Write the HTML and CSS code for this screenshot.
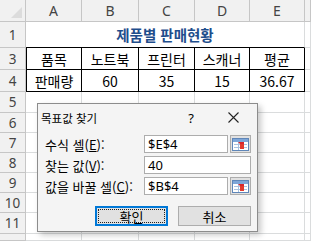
FILE: index.html
```html
<!DOCTYPE html>
<html lang="ko">
<head>
    <meta charset="UTF-8">
    <title>목표값 찾기</title>
    <link rel="stylesheet" href="styles.css">
</head>
<body>
    <div class="sheet">
        <div class="head corner"><span class="tri"></span></div>
        <div class="head">A</div>
        <div class="head">B</div>
        <div class="head">C</div>
        <div class="head">D</div>
        <div class="head">E</div>
        <div class="head"></div>

        <div class="head num">1</div>
        <div class="title">제품별 판매현황</div>
        <div></div>

        <div class="head num">3</div>
        <div class="t first">품목</div>
        <div class="t">노트북</div>
        <div class="t">프린터</div>
        <div class="t">스캐너</div>
        <div class="t">평균</div>
        <div></div>

        <div class="head num">4</div>
        <div class="t first">판매량</div>
        <div class="t">60</div>
        <div class="t">35</div>
        <div class="t">15</div>
        <div class="t">36.67</div>
        <div></div>

        <div class="head num">5</div><div></div><div></div><div></div><div></div><div></div><div></div>
        <div class="head num">6</div><div></div><div></div><div></div><div></div><div></div><div></div>
        <div class="head num">7</div><div></div><div></div><div></div><div></div><div></div><div></div>
        <div class="head num">8</div><div></div><div></div><div></div><div></div><div></div><div></div>
        <div class="head num">9</div><div></div><div></div><div></div><div></div><div></div><div></div>
        <div class="head num">10</div><div></div><div></div><div></div><div></div><div></div><div></div>
        <div class="head num">11</div><div></div><div></div><div></div><div></div><div></div><div></div>
        <div class="head num"></div><div></div><div></div><div></div><div></div><div></div><div></div>
    </div>

    <div class="dialog">
        <div class="dlg-bar">
            <span class="dlg-title">목표값 찾기</span>
            <span class="dlg-help">?</span>
            <svg class="dlg-close" width="11" height="11" viewBox="0 0 11 11">
                <path d="M0.5 0.5 L10.5 10.5 M10.5 0.5 L0.5 10.5" stroke="#222" stroke-width="1.1" fill="none"/>
            </svg>
        </div>
        <div class="dlg-form">
            <label>수식 셀(<u>E</u>):</label>
            <div class="field">
                <span class="input">$E$4</span>
                <span class="ref">
                    <svg width="17" height="13" viewBox="0 0 17 13">
                        <rect x="0.5" y="0.5" width="16" height="12" fill="#fff" stroke="#5f86b8"/>
                        <rect x="1" y="1" width="15" height="3" fill="#7ea6d8"/>
                        <path d="M2 6.5 H15 M2 9.5 H15 M6.5 4 V12" stroke="#a9c2e0" stroke-width="1"/>
                        <path d="M6 4 L12 4 L12 10 Z" fill="#d8262b"/>
                        <rect x="8" y="6" width="4" height="5" fill="#e23a2e"/>
                    </svg>
                </span>
            </div>
            <label>찾는 값(<u>V</u>):</label>
            <div class="field">
                <span class="input">40</span>
            </div>
            <label>값을 바꿀 셀(<u>C</u>):</label>
            <div class="field">
                <span class="input">$B$4</span>
                <span class="ref">
                    <svg width="17" height="13" viewBox="0 0 17 13">
                        <rect x="0.5" y="0.5" width="16" height="12" fill="#fff" stroke="#5f86b8"/>
                        <rect x="1" y="1" width="15" height="3" fill="#7ea6d8"/>
                        <path d="M2 6.5 H15 M2 9.5 H15 M6.5 4 V12" stroke="#a9c2e0" stroke-width="1"/>
                        <path d="M6 4 L12 4 L12 10 Z" fill="#d8262b"/>
                        <rect x="8" y="6" width="4" height="5" fill="#e23a2e"/>
                    </svg>
                </span>
            </div>
        </div>
        <div class="dlg-buttons">
            <button class="btn ok"><span>확인</span></button>
            <button class="btn">취소</button>
        </div>
    </div>
</body>
</html>
```

FILE: styles.css
```css
* {
    box-sizing: border-box;
}
body {
    margin: 0;
    width: 311px;
    height: 241px;
    overflow: hidden;
    position: relative;
    background: #fff;
    font-family: "Noto Sans CJK KR", "Noto Sans", sans-serif;
}
.sheet {
    display: grid;
    grid-template-columns: 26px 56px 57px 56px 55px 55px 6px;
    grid-template-rows: 22px 26px 22px 22px 21px 20px 20px 20px 20px 20px 21px 7px;
}
.sheet > div {
    display: flex;
    align-items: center;
    justify-content: center;
    border-right: 1px solid #dadcdd;
    border-bottom: 1px solid #dadcdd;
    font-size: 14px;
    color: #000;
}
.sheet > .head {
    background: #f1f1f1;
    border-color: #c6c6c6;
    color: #444;
    font-family: "Noto Sans", sans-serif;
    font-size: 14px;
}
.sheet > .num {
    font-size: 13.5px;
}
.corner {
    position: relative;
}
.tri {
    position: absolute;
    right: 3px;
    bottom: 3px;
    border-left: 11px solid transparent;
    border-bottom: 11px solid #dcdcdc;
}
.sheet > .title {
    grid-column: span 5;
    font-weight: bold;
    font-size: 14.5px;
    color: #1f4e8c;
    border-bottom-color: #000;
}
.sheet > .t {
    border-right-color: #000;
    border-bottom-color: #000;
}
.sheet > .first {
    border-left: 1px solid #000;
}

/* goal seek dialog */
.dialog {
    position: absolute;
    left: 37px;
    top: 103px;
    width: 221px;
    height: 129px;
    background: #f4f4f4;
    border: 1px solid #8c8c8c;
    box-shadow: 3px 3px 6px rgba(0, 0, 0, 0.22);
    font-size: 13px;
    color: #000;
}
.dlg-bar {
    display: flex;
    align-items: center;
    height: 27px;
    padding-left: 3px;
}
.dlg-title {
    font-size: 11.5px;
    flex: 1;
}
.dlg-help {
    font-family: "Noto Sans", sans-serif;
    font-size: 13px;
    margin-right: 34px;
}
.dlg-close {
    margin-right: 18px;
}
.dlg-form {
    display: grid;
    grid-template-columns: 99px 107px;
    grid-template-rows: 18px 18px 18px;
    row-gap: 3px;
    padding: 4px 0 0 7px;
}
.dlg-form label {
    display: flex;
    align-items: center;
}
.field {
    display: flex;
    gap: 2px;
}
.input {
    flex: 1;
    display: flex;
    align-items: center;
    padding-left: 3px;
    background: #fff;
    border: 1px solid #adadad;
    font-family: "Noto Sans", sans-serif;
    font-size: 13px;
}
.ref {
    width: 21px;
    display: flex;
    align-items: center;
    justify-content: center;
    background: #e1e1e1;
    border: 1px solid #adadad;
}
.dlg-buttons {
    display: flex;
    gap: 10px;
    padding: 11px 0 0 57px;
}
.btn {
    width: 73px;
    height: 20px;
    padding: 0;
    background: #e1e1e1;
    border: 1px solid #adadad;
    font-family: "Noto Sans CJK KR", sans-serif;
    font-size: 13px;
    color: #000;
}
.btn.ok {
    border: 2px solid #0078d7;
    padding: 1px;
}
.btn.ok span {
    display: flex;
    align-items: center;
    justify-content: center;
    height: 100%;
    border: 1px dotted #222;
}
```
